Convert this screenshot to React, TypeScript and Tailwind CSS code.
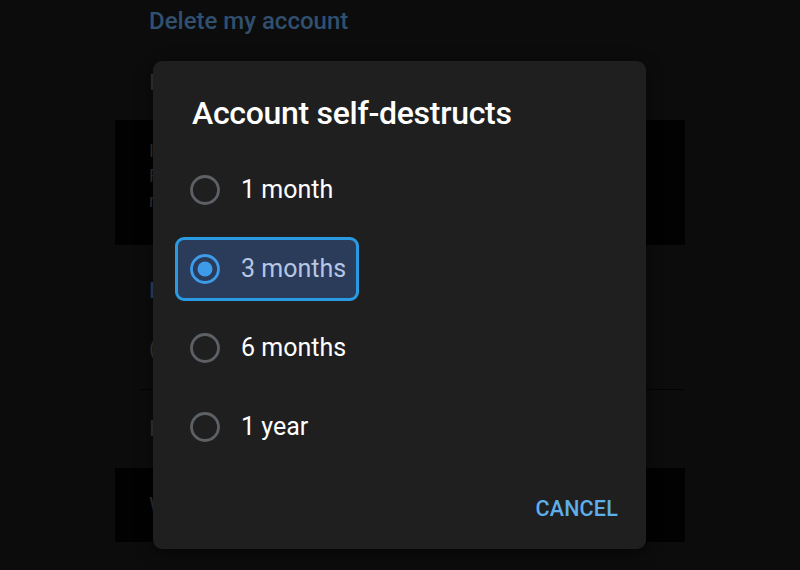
import { useState } from "react";

const options = ["1 month", "3 months", "6 months", "1 year"];

function Radio({ checked }: { checked: boolean }) {
  return (
    <svg width="30" height="30" viewBox="0 0 30 30" className="shrink-0">
      <circle cx="15" cy="15" r="13.5" fill="none" stroke={checked ? "#3d9be9" : "#5d6166"} strokeWidth="2.8" />
      {checked && <circle cx="15" cy="15" r="7.5" fill="#3d9be9" />}
    </svg>
  );
}

export default function App() {
  const [selected, setSelected] = useState("3 months");

  return (
    <main className="relative w-[800px] h-[570px] overflow-hidden bg-[#0c0c0c] font-['Roboto',sans-serif]">
      {/* Settings page behind the dim */}
      <div className="flex flex-col pt-[7px]">
        <p className="pl-[149px] text-[24px] leading-[28px] text-[#31506f] font-medium">Delete my account</p>
        <div className="mt-[34px] pl-[149px] pr-[154px] flex justify-between text-[22px] leading-[28px]">
          <span className="text-[#3a3a3a]">I</span>
          <span className="text-[#2e4863]">s</span>
        </div>
        <div className="mt-[23px] ml-[115px] w-[570px] h-[125px] bg-[#020202] pl-[34px] pt-[18px] flex flex-col text-[18px] leading-[25px] text-[#333]">
          <span>I</span>
          <span>F</span>
          <span>r</span>
        </div>
        <p className="mt-[32px] pl-[149px] text-[22px] leading-[28px] text-[#2e4863] font-medium">I</p>
        <p className="mt-[30px] pl-[149px] text-[22px] leading-[28px] text-[#3a3a3a]">(</p>
        <div className="mt-[26px] ml-[140px] w-[545px] h-px bg-[#040404]" />
        <p className="mt-[25px] pl-[149px] text-[22px] leading-[28px] text-[#3a3a3a]">I</p>
        <div className="mt-[25px] ml-[115px] w-[570px] h-[74px] bg-[#020202] pl-[34px] flex items-center text-[22px] text-[#333]">
          W
        </div>
      </div>

      {/* Dialog */}
      <div className="absolute left-[153px] top-[61px] w-[493px] h-[488px] rounded-[9px] bg-[#1f1f1f] shadow-[0_4px_16px_rgba(0,0,0,0.5)] flex flex-col">
        <h1 className="pl-[39px] pt-[33px] text-[32px] leading-[38px] font-medium text-white tracking-[-0.3px]">
          Account self-destructs
        </h1>
        <div className="mt-[18px] flex flex-col">
          {options.map((opt) => {
            const checked = selected === opt;
            return (
              <div key={opt} className="h-[79px] flex items-center">
                <button
                  onClick={() => setSelected(opt)}
                  className={`ml-[22px] h-[64px] flex items-center gap-[21px] pl-[12px] pr-[10px] rounded-[9px] border-[3px] ${
                    checked ? "bg-[#2b3c5b] border-[#2a9be2]" : "border-transparent"
                  }`}
                >
                  <Radio checked={checked} />
                  <span className={`text-[25px] leading-[30px] ${checked ? "text-[#b5c7e4]" : "text-white"}`}>{opt}</span>
                </button>
              </div>
            );
          })}
        </div>
        <div className="mt-auto mb-[28px] pr-[28px] flex justify-end">
          <button className="text-[21.5px] leading-[24px] font-medium text-[#5eaeea] tracking-[0.2px]">CANCEL</button>
        </div>
      </div>
    </main>
  );
}
